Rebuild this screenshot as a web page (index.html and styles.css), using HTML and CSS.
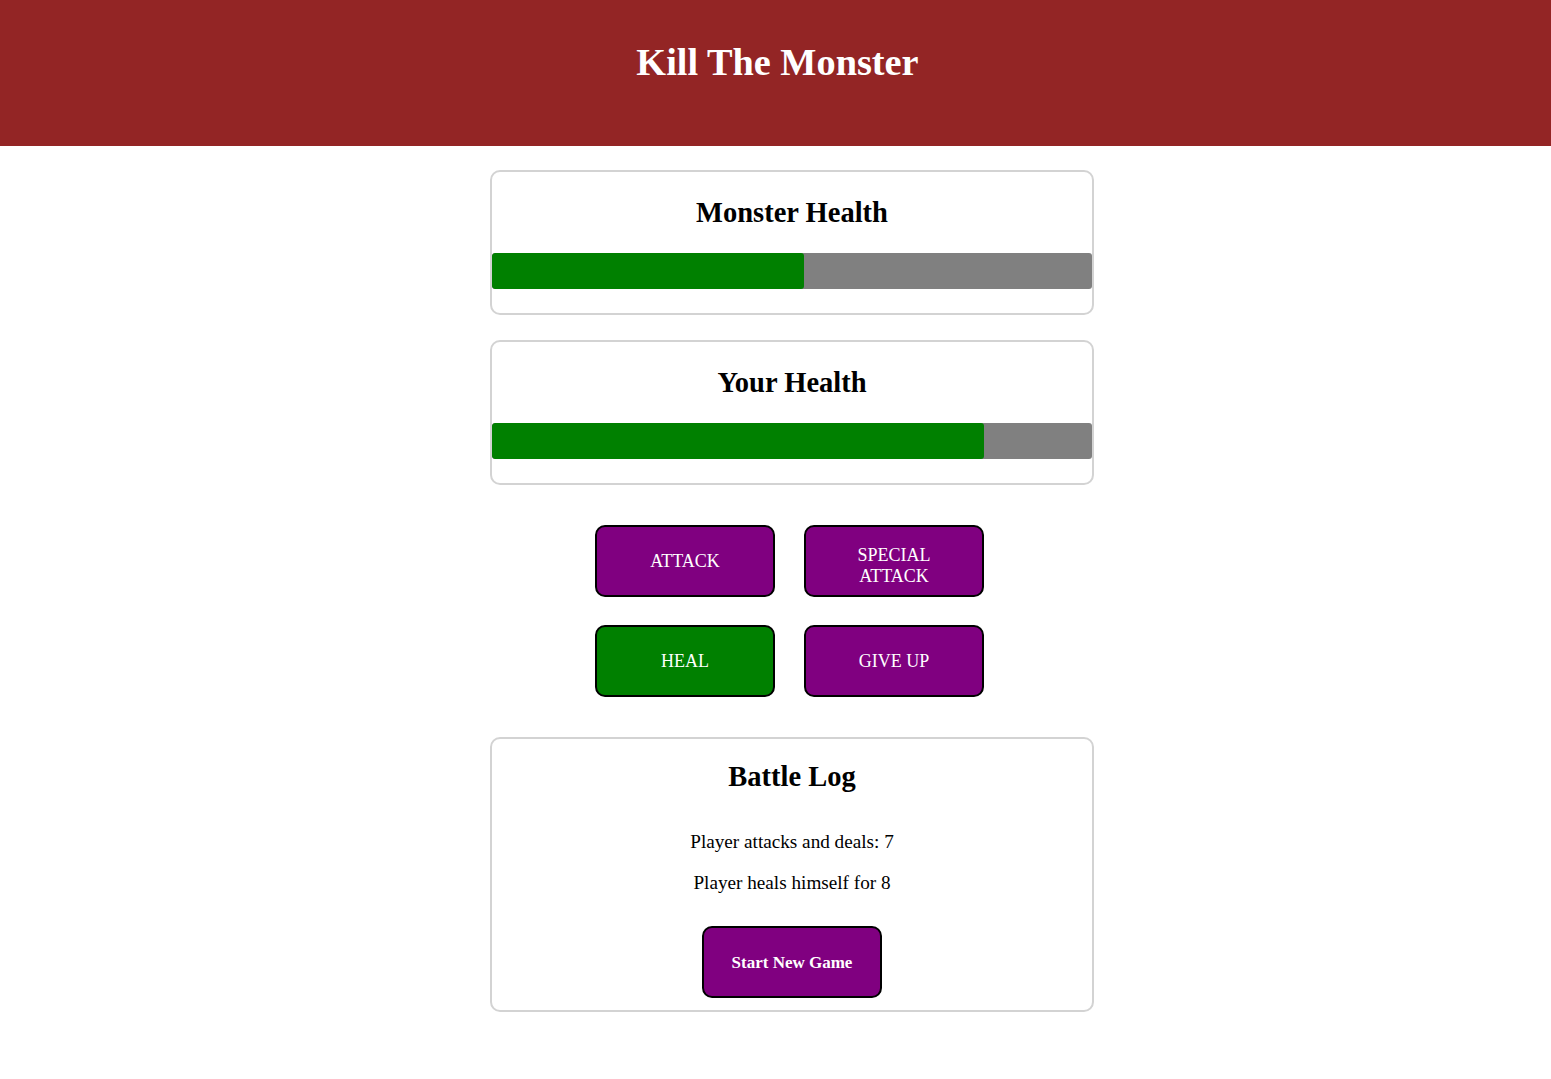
FILE: index.html
```
<!DOCTYPE html>
<html lang="en">
<head>
<meta charset="utf-8">
<title>Kill The Monster</title>
<link rel="stylesheet" href="styles.css">
</head>
<body>
<header class="site-header">
  <h1 class="site-title">Kill The Monster</h1>
</header>
<main class="game">
  <section class="card">
    <h2 class="card-title">Monster Health</h2>
    <div class="healthbar"><div class="healthbar-value" style="width: 52%;"></div></div>
  </section>
  <section class="card">
    <h2 class="card-title">Your Health</h2>
    <div class="healthbar"><div class="healthbar-value" style="width: 82%;"></div></div>
  </section>
  <section class="controls">
    <button class="btn">ATTACK</button>
    <button class="btn btn-two-line">SPECIAL ATTACK</button>
    <button class="btn btn-green">HEAL</button>
    <button class="btn">GIVE UP</button>
  </section>
  <section class="card card-log">
    <h2 class="card-title log-title">Battle Log</h2>
    <div class="log-list">
      <p class="log-entry">Player attacks and deals: 7</p>
      <p class="log-entry">Player heals himself for 8</p>
    </div>
    <button class="btn btn-bold">Start New Game</button>
  </section>
</main>
</body>
</html>
```
FILE: styles.css
```
* {
  box-sizing: border-box;
}

body {
  margin: 0;
  font-family: "Liberation Serif", "Times New Roman", serif;
  color: #000;
  background: #fff;
}

.site-header {
  height: 146px;
  padding: 40px 0 0 4px;
  background-color: #932525;
  color: #fff;
  text-align: center;
}

.site-title {
  margin: 0;
  font-size: 38.3px;
  font-weight: bold;
}

.game {
  padding: 24px 0 40px 33px;
  display: flex;
  flex-direction: column;
  align-items: center;
}

.card {
  width: 604px;
  border: 2px solid #d3d3d3;
  border-radius: 10px;
  padding: 25px 0 24px;
  text-align: center;
  margin-bottom: 25px;
}

.card-title {
  margin: 0 0 24px;
  font-size: 28.5px;
  line-height: 32px;
  font-weight: bold;
}

.healthbar {
  height: 36px;
  background-color: #808080;
  border-radius: 3px;
  overflow: hidden;
}

.healthbar-value {
  height: 100%;
  background-color: #008000;
  border-radius: 3px;
}

.controls {
  display: grid;
  grid-template-columns: 180px 180px;
  column-gap: 29px;
  row-gap: 28px;
  margin: 15px 5px 40px 0;
}

.btn {
  width: 180px;
  height: 72px;
  padding: 0 20px;
  border: 2px solid #000;
  border-radius: 10px;
  background-color: #800080;
  color: #fff;
  font-family: "Liberation Serif", "Times New Roman", serif;
  font-size: 18px;
  line-height: 21px;
  display: flex;
  align-items: center;
  justify-content: center;
  text-align: center;
}

.btn-two-line {
  padding-top: 9px;
}

.btn-green {
  background-color: #008000;
}

.btn-bold {
  font-size: 17px;
  font-weight: bold;
  margin: 32px auto 0;
}

.card-log {
  padding: 22px 0 12px;
  margin-bottom: 0;
}

.log-title {
  margin-bottom: 38px;
}

.log-list {
  display: flex;
  flex-direction: column;
  gap: 19px;
}

.log-entry {
  margin: 0;
  font-size: 19.2px;
  line-height: 22px;
}
```
